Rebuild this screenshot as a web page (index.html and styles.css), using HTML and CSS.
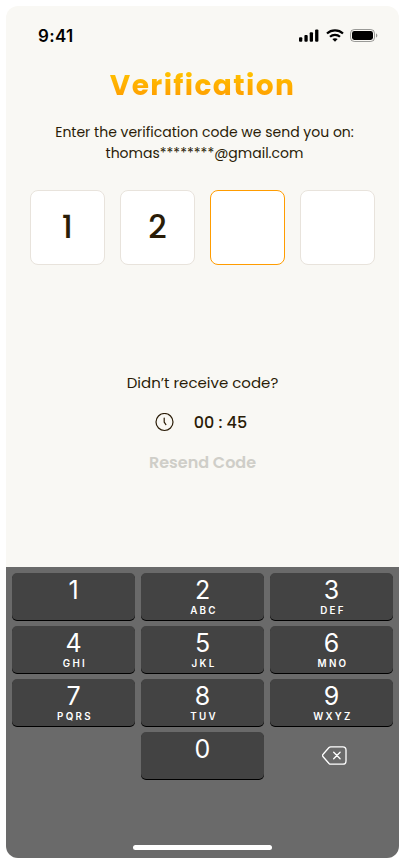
FILE: index.html
```html
<!DOCTYPE html>
<html lang="en">
<head>
<meta charset="utf-8">
<title>Verification</title>
<link rel="stylesheet" href="styles.css">
</head>
<body>
<main class="phone">
  <header class="status">
    <span class="time">9:41</span>
    <div class="status-icons">
      <svg class="signal" width="20" height="13" viewBox="0 0 20 13"><rect x="0" y="8.3" width="3.3" height="4.5" rx="1"/><rect x="5.4" y="6" width="3.3" height="6.8" rx="1"/><rect x="10.7" y="3.3" width="3.3" height="9.5" rx="1"/><rect x="16.1" y="0.6" width="3.3" height="12.2" rx="1"/></svg>
      <svg class="wifi" width="18" height="13" viewBox="0 0 18 13" fill="none" stroke="#000" stroke-width="2.2"><path d="M1 4.5C5.4 .4 12.6 .4 17 4.500"/><path d="M4 7.800C6.800 5.200 11.200 5.200 14 7.800"/><path d="M9 12.800L6.300 10.100C7.800 8.800 10.200 8.800 11.700 10.100Z" fill="#000" stroke="none"/></svg>
      <svg class="battery" width="28" height="13" viewBox="0 0 28 13"><rect x=".5" y=".5" width="24" height="12" rx="3.8" fill="none" stroke="#000" stroke-opacity=".38"/><rect x="2" y="2" width="21" height="9" rx="2.4"/><path d="M26 4.500v4c.8-.3 1.300-1.100 1.300-2s-.5-1.700-1.300-2z" fill-opacity=".4"/></svg>
    </div>
  </header>
  <h1 class="title">Verification</h1>
  <p class="lead">Enter the verification code we send you on:<br>thomas********@gmail.com</p>
  <div class="code">
    <div class="cell">1</div>
    <div class="cell">2</div>
    <div class="cell active"></div>
    <div class="cell"></div>
  </div>
  <section class="resend">
    <p class="ask">Didn’t receive code?</p>
    <div class="timer">
      <svg width="20" height="20" viewBox="0 0 20 20" fill="none" stroke="#2a1c07" stroke-width="1.2" stroke-linecap="round" stroke-linejoin="round"><circle cx="9.500" cy="9" r="8.500"/><path d="M9.200 5v4.200l1.700 2.400"/></svg>
      <span class="count">00 : 45</span>
    </div>
    <p class="again">Resend Code</p>
  </section>
  <section class="keypad">
    <div class="keys">
      <div class="key"><b>1</b></div>
      <div class="key"><b>2</b><i>ABC</i></div>
      <div class="key"><b>3</b><i>DEF</i></div>
      <div class="key"><b>4</b><i>GHI</i></div>
      <div class="key"><b>5</b><i>JKL</i></div>
      <div class="key"><b>6</b><i>MNO</i></div>
      <div class="key"><b>7</b><i>PQRS</i></div>
      <div class="key"><b>8</b><i>TUV</i></div>
      <div class="key"><b>9</b><i>WXYZ</i></div>
      <div></div>
      <div class="key"><b>0</b></div>
      <div class="erase"><svg width="25" height="19" viewBox="0 0 25 19" fill="none" stroke="#fff" stroke-width="1.300" stroke-linecap="round" stroke-linejoin="round"><path d="M8.700.8H20.800a3.200 3.200 0 0 1 3.200 3.200v11a3.200 3.200 0 0 1-3.200 3.200H8.700a2.500 2.500 0 0 1-1.700-.7L1.100 10.700a1.700 1.700 0 0 1 0-2.400L7 1.500A2.500 2.500 0 0 1 8.700.8z"/><path d="M11.700 6.200l6.400 6.600M18.100 6.200l-6.400 6.600"/></svg></div>
    </div>
    <div class="home"></div>
  </section>
</main>
</body>
</html>
```
FILE: styles.css
```css
* { box-sizing: border-box; margin: 0; padding: 0; }
body {
  background: #fff;
  padding: 6px;
  font-family: Poppins, Inter, sans-serif;
  color: #2a1c07;
}
.phone {
  width: 393px;
  height: 852px;
  border-radius: 12px;
  overflow: hidden;
  background: #f9f8f4;
  display: flex;
  flex-direction: column;
}
.status {
  height: 59px;
  padding: 0 21px 0 32px;
  display: flex;
  align-items: center;
  justify-content: space-between;
  flex: none;
}
.time { font: 600 17px/22px Inter, sans-serif; color: #000; letter-spacing: 0.3px; }
.status-icons { display: flex; align-items: center; }
.wifi { margin: 0 6px 0 7px; }
.title {
  height: 42px;
  line-height: 42px;
  font-size: 28px;
  font-weight: 700;
  letter-spacing: 1.4px;
  text-align: center;
  width: max-content;
  margin: 0 auto;
  background: linear-gradient(#ffc000 20%, #ff9c00 80%);
  -webkit-background-clip: text;
  background-clip: text;
  color: transparent;
}
.lead { margin-top: 15px; padding-left: 4px; font-size: 14px; line-height: 21px; text-align: center; height: 42px; }
.code { margin-top: 26px; padding: 0 24px; display: flex; justify-content: space-between; }
.cell {
  width: 74.5px;
  height: 75px;
  padding-bottom: 1px;
  border: 1px solid #e8e3dc;
  border-radius: 8px;
  background: #fff;
  display: flex;
  align-items: center;
  justify-content: center;
  font-size: 32px;
  font-weight: 500;
}
.active { border-color: #ff9c00; }
.resend { margin-top: 107px; text-align: center; flex: 1; }
.ask { font-size: 15px; line-height: 22px; }
.timer { margin-top: 17px; padding-right: 3px; height: 24px; display: flex; align-items: center; justify-content: center; gap: 19px; }
.count { font-size: 16px; font-weight: 500; line-height: 24px; }
.again { margin-top: 16px; font-size: 16px; line-height: 24px; font-weight: 600; color: #cfcec8; }
.keypad {
  height: 291px;
  background: #6a6a6a;
  padding: 6px 6px 8px;
  display: flex;
  flex-direction: column;
  justify-content: space-between;
  align-items: center;
}
.keys { width: 100%; display: grid; grid-template-columns: repeat(3, 1fr); grid-auto-rows: 47px; gap: 6px; }
.key {
  background: #434343;
  border-radius: 5px;
  box-shadow: 0 1px 0 #000;
  color: #fff;
  font-family: Inter, sans-serif;
  text-align: center;
  display: flex;
  flex-direction: column;
  align-items: center;
}
.key b { font-size: 25px; line-height: 29px; font-weight: 370; padding-top: 3px; }
.key i { font-style: normal; font-size: 9.8px; line-height: 12px; font-weight: 600; letter-spacing: 2.3px; padding-left: 3px; }
.erase { display: flex; align-items: center; justify-content: center; padding-left: 5px; padding-bottom: 1px; }
.home { width: 139px; height: 5px; border-radius: 3px; background: #fff; }
```
